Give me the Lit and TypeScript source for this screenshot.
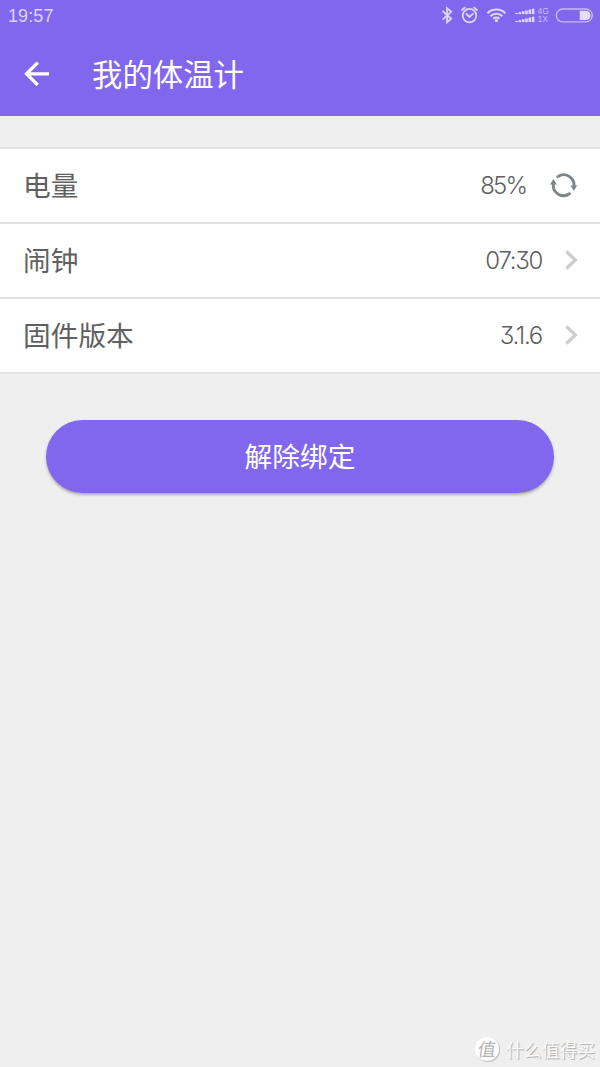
import { LitElement, html, css, svg } from "lit";
import { customElement, property } from "lit/decorators.js";

const chevron = html`<svg class="chevron" width="14" height="20" viewBox="0 0 14 20">
  <path d="M2.4 1.5L11.4 10L2.4 18.5" fill="none" stroke="#cdcdcb" stroke-width="3.3" />
</svg>`;

const refresh = html`<svg width="28" height="26" viewBox="0 0 28 26">
  <g fill="none" stroke="#7f868b" stroke-width="2.9" stroke-linecap="round">
    <path d="M7.9 4.6A10.3 10.3 0 0 1 24 14" />
    <path d="M19.5 21.8A10.3 10.3 0 0 1 3.4 12" />
  </g>
  <path d="M20.4 13.6H27.3L23.8 18.8Z M0 12.4H6.9L3.3 7Z" fill="#7f868b" />
</svg>`;

@customElement("status-bar")
class StatusBar extends LitElement {
  static styles = css`
    :host { display: flex; justify-content: space-between; height: 31px; padding-left: 8px; color: #dcd6fb; }
    .time { font: 400 18px/33px "Liberation Sans", sans-serif; letter-spacing: 0.1px; }
    svg { display: block; }
    text { font-family: "Liberation Sans", sans-serif; font-size: 8.6px; fill: #c6bcf8; }
  `;
  render() {
    const bars = [0, 1, 2, 3, 4, 5];
    return html`<span class="time">19:57</span>
      <svg width="170" height="31" viewBox="0 0 170 31">
        <path d="M12.5 11L21.2 18.8L17 22.3V8.2L21.2 11.8L12.5 19.6" fill="none" stroke="#dcd6fb" stroke-width="1.8" />
        <g fill="none" stroke="#dcd6fb" stroke-width="1.8" stroke-linecap="round">
          <circle cx="39.5" cy="15.6" r="6.8" />
          <path d="M36.4 14L39.4 17L43 13.8" />
          <path d="M32 9.9L34.8 7.7M47 9.9L44.2 7.7" stroke-width="1.9" />
        </g>
        <g fill="none" stroke="#dcd6fb" stroke-width="2.1">
          <path d="M57.4 13.2A12.7 12.7 0 0 1 75.4 13.2" />
          <path d="M60.4 16.2A8.6 8.6 0 0 1 72.4 16.2" />
          <path d="M63.2 18.8A4.8 4.8 0 0 1 69.6 18.8" />
        </g>
        <circle cx="66.4" cy="20.6" r="1.6" fill="#dcd6fb" />
        ${bars.map((i) => svg`
          <rect x=${85.3 + i * 3.3} y=${12.9 - i * 0.85} width="2.6" height=${1.2 + i * 0.85} fill="#dcd6fb" />
          <rect x=${85.3 + i * 3.3} y=${20.9 - i * 0.85} width="2.6" height=${1.2 + i * 0.85} fill="#dcd6fb" />`)}
        <text x="107.6" y="14.2">4G</text>
        <text x="107.6" y="22.1">1X</text>
        <rect x="126.3" y="9" width="36" height="12.8" rx="6.4" fill="none" stroke="#c6bcf8" stroke-width="1.3" />
        <path d="M149.7 10.8H156A4.6 4.6 0 0 1 156 20H149.7Z" fill="#e3defc" />
      </svg>`;
  }
}

@customElement("setting-row")
class SettingRow extends LitElement {
  @property() label = "";
  @property() value = "";
  @property() icon = "chevron";
  static styles = css`
    :host { display: flex; align-items: center; height: 75px; box-sizing: border-box; padding: 0 22px 2px 23px;
      border-bottom: 2px solid #e1e1e1; background: #fff; color: #606060; }
    .label { flex: 1; font: 400 27.7px/40px "Noto Sans CJK SC", sans-serif; padding-bottom: 2px; }
    .value { font: 300 24px/36px Inter, sans-serif; font-feature-settings: "cv09"; letter-spacing: -1.3px; padding-top: 3px; }
    .percent { letter-spacing: -1.9px; padding-right: 1px; }
    .icon { display: flex; justify-content: flex-end; width: 36px; }
    .refresh { width: 51px; }
  `;
  render() {
    const isRefresh = this.icon === "refresh";
    return html`<span class="label">${this.label}</span><span class=${isRefresh ? "value percent" : "value"}>${this.value}</span>
      <span class=${isRefresh ? "icon refresh" : "icon"}>${isRefresh ? refresh : chevron}</span>`;
  }
}

@customElement("app-root")
class AppRoot extends LitElement {
  static styles = css`
    :host { display: flex; flex-direction: column; height: 1067px; background: #efefef; overflow: hidden;
      font-family: "Noto Sans CJK SC", sans-serif; }
    header { background: #8067ee; height: 116px; flex: none; }
    .bar { display: flex; align-items: center; height: 85px; padding-left: 24px; color: #fff; }
    h1 { margin: 0 0 0 42px; padding-bottom: 2px; font-size: 30.4px; line-height: 44px; font-weight: 400; }
    .list { margin-top: 31px; border-top: 2px solid #e1e1e1; }
    button { margin: 45.5px 46px 0; height: 73.5px; flex: none; border: 0; border-radius: 37px; background: #8067ee; color: #fff;
      font: 400 27.7px/40px "Noto Sans CJK SC", sans-serif; padding: 0 0 2px; box-shadow: 0 2px 3px rgba(0, 0, 0, 0.27); }
    footer { display: flex; align-items: center; justify-content: flex-end; margin-top: auto; height: 36px; padding-right: 5px;
      color: #fcfcfc; font-size: 17.8px; text-shadow: 1px 1px 1px #aaa; }
    .seal { width: 24px; height: 24px; margin-right: 7px; border-radius: 50%; background: #fff; color: #b5b5b5;
      font-size: 18px; line-height: 23px; text-align: center; text-shadow: none; box-shadow: 1px 1px 1px #bbb; }
    .glyph { display: block; transform: skewX(-8deg); }
  `;
  render() {
    return html`<header>
        <status-bar></status-bar>
        <div class="bar">
          <svg width="26" height="26" viewBox="0 0 26 26" fill="none" stroke="#fff" stroke-width="3.3">
            <path d="M25 12.8H3M13.7 1.6L2.5 12.8L13.7 24" />
          </svg>
          <h1>我的体温计</h1>
        </div>
      </header>
      <div class="list">
        <setting-row label="电量" value="85%" icon="refresh"></setting-row>
        <setting-row label="闹钟" value="07:30"></setting-row>
        <setting-row label="固件版本" value="3.1.6"></setting-row>
      </div>
      <button>解除绑定</button>
      <footer><span class="seal"><span class="glyph">值</span></span><span>什么值得买</span></footer>`;
  }
}
